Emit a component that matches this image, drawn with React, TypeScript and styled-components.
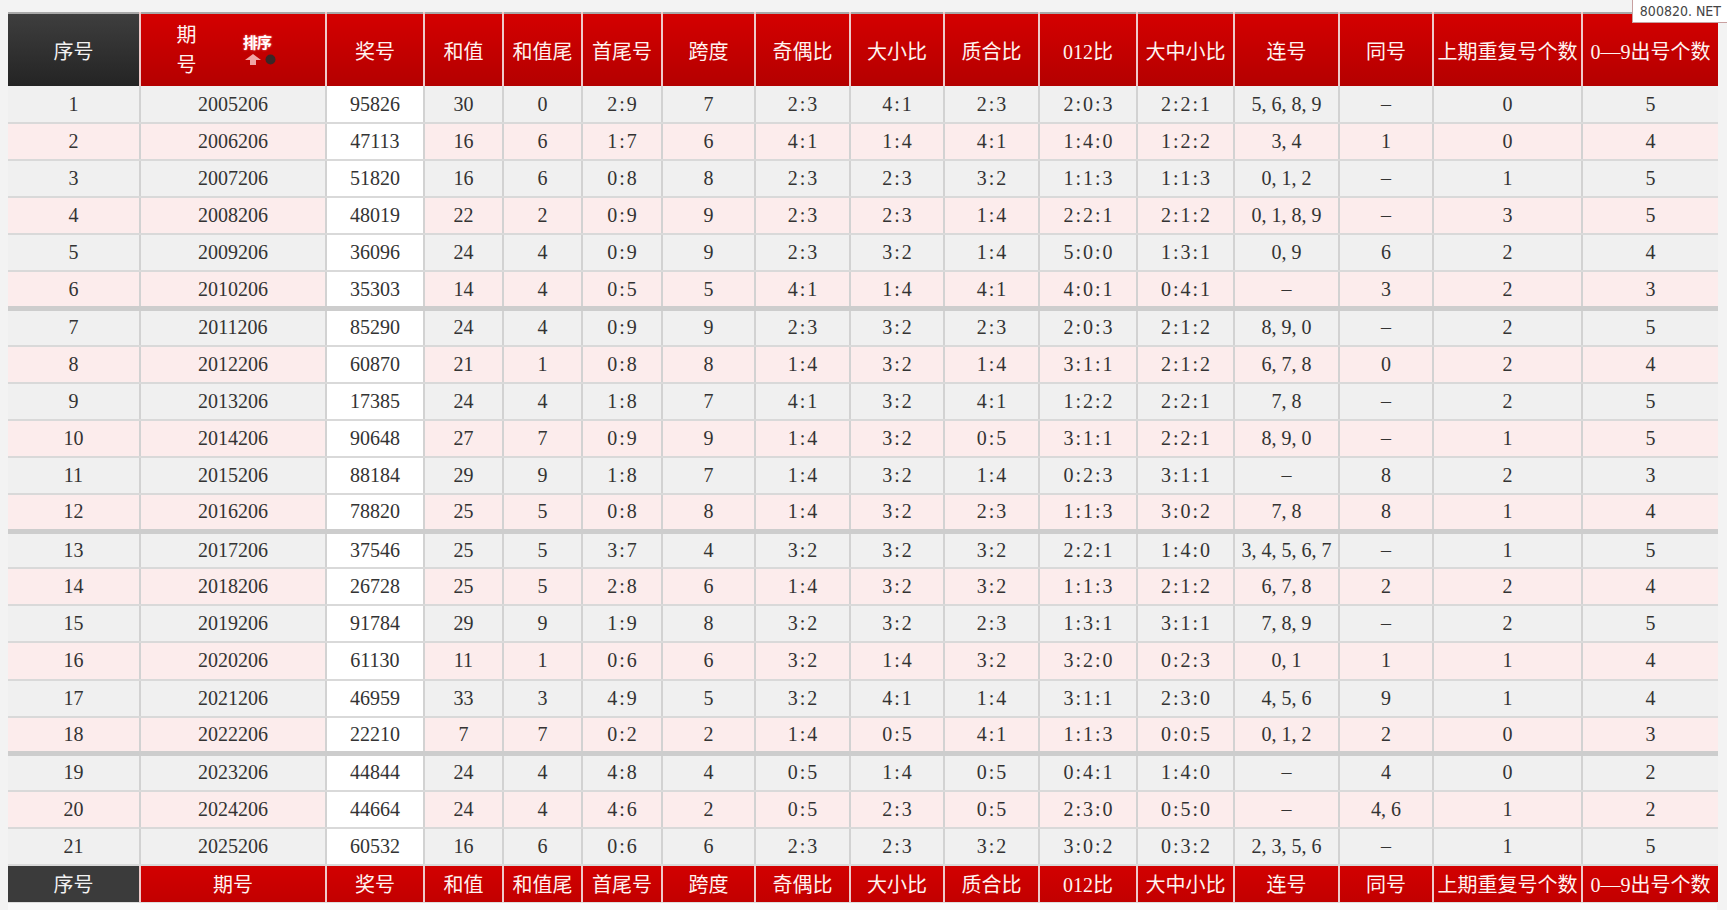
import React from 'react';
import styled, { createGlobalStyle, css } from 'styled-components';

type Row = string[];

const COLUMNS = [
  '序号', '期号', '奖号', '和值', '和值尾', '首尾号', '跨度', '奇偶比', '大小比',
  '质合比', '012比', '大中小比', '连号', '同号', '上期重复号个数', '0—9出号个数',
];

const WIDTHS = [132, 186, 98, 79, 79, 80, 93, 95, 94, 95, 98, 97, 105, 94, 149, 136];

const ROWS: Row[] = [
  ['1', '2005206', '95826', '30', '0', '2:9', '7', '2:3', '4:1', '2:3', '2:0:3', '2:2:1', '5, 6, 8, 9', '–', '0', '5'],
  ['2', '2006206', '47113', '16', '6', '1:7', '6', '4:1', '1:4', '4:1', '1:4:0', '1:2:2', '3, 4', '1', '0', '4'],
  ['3', '2007206', '51820', '16', '6', '0:8', '8', '2:3', '2:3', '3:2', '1:1:3', '1:1:3', '0, 1, 2', '–', '1', '5'],
  ['4', '2008206', '48019', '22', '2', '0:9', '9', '2:3', '2:3', '1:4', '2:2:1', '2:1:2', '0, 1, 8, 9', '–', '3', '5'],
  ['5', '2009206', '36096', '24', '4', '0:9', '9', '2:3', '3:2', '1:4', '5:0:0', '1:3:1', '0, 9', '6', '2', '4'],
  ['6', '2010206', '35303', '14', '4', '0:5', '5', '4:1', '1:4', '4:1', '4:0:1', '0:4:1', '–', '3', '2', '3'],
  ['7', '2011206', '85290', '24', '4', '0:9', '9', '2:3', '3:2', '2:3', '2:0:3', '2:1:2', '8, 9, 0', '–', '2', '5'],
  ['8', '2012206', '60870', '21', '1', '0:8', '8', '1:4', '3:2', '1:4', '3:1:1', '2:1:2', '6, 7, 8', '0', '2', '4'],
  ['9', '2013206', '17385', '24', '4', '1:8', '7', '4:1', '3:2', '4:1', '1:2:2', '2:2:1', '7, 8', '–', '2', '5'],
  ['10', '2014206', '90648', '27', '7', '0:9', '9', '1:4', '3:2', '0:5', '3:1:1', '2:2:1', '8, 9, 0', '–', '1', '5'],
  ['11', '2015206', '88184', '29', '9', '1:8', '7', '1:4', '3:2', '1:4', '0:2:3', '3:1:1', '–', '8', '2', '3'],
  ['12', '2016206', '78820', '25', '5', '0:8', '8', '1:4', '3:2', '2:3', '1:1:3', '3:0:2', '7, 8', '8', '1', '4'],
  ['13', '2017206', '37546', '25', '5', '3:7', '4', '3:2', '3:2', '3:2', '2:2:1', '1:4:0', '3, 4, 5, 6, 7', '–', '1', '5'],
  ['14', '2018206', '26728', '25', '5', '2:8', '6', '1:4', '3:2', '3:2', '1:1:3', '2:1:2', '6, 7, 8', '2', '2', '4'],
  ['15', '2019206', '91784', '29', '9', '1:9', '8', '3:2', '3:2', '2:3', '1:3:1', '3:1:1', '7, 8, 9', '–', '2', '5'],
  ['16', '2020206', '61130', '11', '1', '0:6', '6', '3:2', '1:4', '3:2', '3:2:0', '0:2:3', '0, 1', '1', '1', '4'],
  ['17', '2021206', '46959', '33', '3', '4:9', '5', '3:2', '4:1', '1:4', '3:1:1', '2:3:0', '4, 5, 6', '9', '1', '4'],
  ['18', '2022206', '22210', '7', '7', '0:2', '2', '1:4', '0:5', '4:1', '1:1:3', '0:0:5', '0, 1, 2', '2', '0', '3'],
  ['19', '2023206', '44844', '24', '4', '4:8', '4', '0:5', '1:4', '0:5', '0:4:1', '1:4:0', '–', '4', '0', '2'],
  ['20', '2024206', '44664', '24', '4', '4:6', '2', '0:5', '2:3', '0:5', '2:3:0', '0:5:0', '–', '4, 6', '1', '2'],
  ['21', '2025206', '60532', '16', '6', '0:6', '6', '2:3', '2:3', '3:2', '3:0:2', '0:3:2', '2, 3, 5, 6', '–', '1', '5'],
];

const SortIcon: React.FC = () => (
  <SortBox>
    <SortLabel>排序</SortLabel>
    <SortMarks>
      <svg width="16" height="11" viewBox="0 0 16 11">
        <path d="M8 0 L16 6 L11 6 L11 11 L5 11 L5 6 L0 6 Z" fill="#f0a4a4" />
      </svg>
      <svg width="11" height="11" viewBox="0 0 11 11">
        <circle cx="5.5" cy="5.5" r="5" fill="#3a2626" />
      </svg>
    </SortMarks>
  </SortBox>
);

const HeaderRow: React.FC<{ footer?: boolean }> = ({ footer }) => (
  <tr>
    {COLUMNS.map((title, i) => (
      <HeadCell key={title} $dark={i === 0} $footer={!!footer}>
        {i === 1 && !footer ? (
          <PeriodHead>
            <PeriodText>期号</PeriodText>
            <SortIcon />
          </PeriodHead>
        ) : (
          title
        )}
      </HeadCell>
    ))}
  </tr>
);

const App: React.FC = () => {
  return (
    <>
      <GlobalStyle />
      <Page>
        <Watermark>800820. NET</Watermark>
        <Table>
          <colgroup>
            {WIDTHS.map((w, i) => (
              <col key={i} style={{ width: w }} />
            ))}
          </colgroup>
          <thead>
            <HeaderRow />
          </thead>
          <tbody>
            {ROWS.map((row, r) => (
              <BodyRow key={row[0]} $pink={r % 2 === 1} $groupEnd={r === 5 || r === 11 || r === 17}>
                {row.map((value, c) => (
                  <Cell key={c} $white={c === 2} $ratio={value.includes(':')}>
                    {value}
                  </Cell>
                ))}
              </BodyRow>
            ))}
          </tbody>
          <tfoot>
            <HeaderRow footer />
          </tfoot>
        </Table>
        <BelowStrip />
      </Page>
    </>
  );
};

export default App;

const GlobalStyle = createGlobalStyle`
  html, body {
    margin: 0;
    padding: 0;
    background: #f3f3f3;
  }
  body {
    font-family: "Liberation Serif", "Noto Sans CJK SC", serif;
    color: #333;
  }
`;

const Page = styled.div`
  position: relative;
  width: 1727px;
  height: 910px;
  padding: 12px 10px 0 8px;
  box-sizing: border-box;
  overflow: hidden;
`;

const Watermark = styled.div`
  position: absolute;
  top: 0;
  right: 0;
  padding: 3px 6px 3px 7px;
  background: #fff;
  border: 1px solid #c8a0a0;
  border-top: none;
  border-right: none;
  font-family: "DejaVu Sans Condensed", "DejaVu Sans", sans-serif;
  font-size: 14px;
  color: #444;
  z-index: 2;
`;

const Table = styled.table`
  width: 1709px;
  table-layout: fixed;
  border-collapse: collapse;
  border-top: 2px solid #a9a9a9;
`;

const HeadCell = styled.th<{ $dark: boolean; $footer: boolean }>`
  height: ${(p) => (p.$footer ? '37px' : '73px')};
  padding: 0;
  box-sizing: border-box;
  border-left: 2px solid #efcaca;
  font-family: "Liberation Serif", "Noto Sans CJK SC", serif;
  font-weight: normal;
  font-size: 20px;
  color: #fff3f0;
  white-space: nowrap;
  text-align: center;
  background: linear-gradient(#d40000, #b40000);

  &:first-child {
    border-left: none;
  }

  ${(p) =>
    p.$footer &&
    css`
      background: linear-gradient(#d20000, #c20000);
      border-top: 2px solid #d6d6d6;
    `}

  ${(p) =>
    p.$dark &&
    css`
      color: #f2f2f2;
      background: ${p.$footer ? '#3b3b3b' : 'linear-gradient(#3e3e3e, #242424)'};
    `}
`;

const PeriodHead = styled.div`
  display: flex;
  align-items: center;
  justify-content: center;
  gap: 42px;
  padding-right: 14px;
`;

const PeriodText = styled.span`
  width: 1em;
  white-space: normal;
  line-height: 30px;
`;

const SortBox = styled.div`
  display: flex;
  flex-direction: column;
  align-items: center;
  gap: 3px;
  margin-top: -2px;
`;

const SortLabel = styled.span`
  font-family: "Noto Sans CJK SC", sans-serif;
  font-weight: 700;
  font-size: 15px;
  line-height: 18px;
  color: #fff;
  text-shadow: 0 0 2px #ff9a9a;
  letter-spacing: -1px;
`;

const SortMarks = styled.span`
  display: flex;
  align-items: center;
  gap: 4px;
  margin-left: 6px;
`;

const BodyRow = styled.tr<{ $pink: boolean; $groupEnd: boolean }>`
  background: ${(p) => (p.$pink ? '#fcecec' : '#f0f0f0')};

  & > td {
    border-bottom: ${(p) => (p.$groupEnd ? '5px solid #cdcdcd' : '2px solid #d9d9d9')};
  }
`;

const Cell = styled.td<{ $white: boolean; $ratio: boolean }>`
  height: 37.1px;
  padding: 0;
  box-sizing: border-box;
  border-left: 2px solid #d2d2d2;
  text-align: center;
  font-size: 20px;
  color: #333;
  white-space: nowrap;
  ${(p) => p.$white && 'background: #fff;'}
  ${(p) => p.$ratio && 'letter-spacing: 2px; text-indent: 2px;'}

  &:first-child {
    border-left: none;
  }
`;

const BelowStrip = styled.div`
  height: 8px;
  background: #fafafa;
  border-top: 1px solid #dddddd;
`;
